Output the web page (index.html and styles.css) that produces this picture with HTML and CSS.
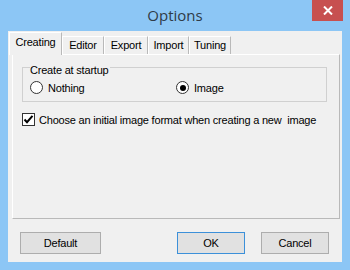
FILE: index.html
```html
<!DOCTYPE html>
<html>
<head>
<meta charset="utf-8">
<link rel="stylesheet" href="styles.css">
</head>
<body>
<div class="window">
  <div class="titlebar">
    <span></span>
    <span class="title">Options</span>
    <span class="close"><svg width="10" height="9" viewBox="0 0 10 9"><path d="M1 0.5 L9 8.5 M9 0.5 L1 8.5" stroke="#fff" stroke-width="2"/></svg></span>
  </div>
  <div class="client">
    <div class="tabs">
      <span class="tab active">Creating</span>
      <span class="tab t-editor">Editor</span>
      <span class="tab t-export">Export</span>
      <span class="tab t-import">Import</span>
      <span class="tab t-tuning">Tuning</span>
    </div>
    <div class="panel">
      <fieldset class="group">
        <legend>Create at startup</legend>
        <div class="radios">
          <span class="radio"><span class="circle"></span>Nothing</span>
          <span class="radio"><span class="circle on"></span>Image</span>
        </div>
      </fieldset>
      <div class="check">
        <span class="box"><svg width="11" height="11" viewBox="0 0 11 11"><path d="M1.5 5.5 L4 8.2 L9.5 1.8" fill="none" stroke="#000" stroke-width="2"/></svg></span>
        <span>Choose an initial image format when creating a new&nbsp; image</span>
      </div>
    </div>
    <div class="buttons">
      <span class="btn wide">Default</span>
      <span class="spacer"></span>
      <span class="btn default">OK</span>
      <span class="btn">Cancel</span>
    </div>
  </div>
</div>
</body>
</html>
```

FILE: styles.css
```css
html, body {
  margin: 0;
  padding: 0;
}
body {
  width: 350px;
  height: 270px;
  overflow: hidden;
  font-family: "Liberation Sans", Arial, sans-serif;
  font-size: 11px;
  letter-spacing: -0.2px;
  color: #000;
}
.window {
  width: 350px;
  height: 270px;
  background: #8cc6f5;
  display: flex;
  flex-direction: column;
}
.titlebar {
  height: 31px;
  display: grid;
  grid-template-columns: 1fr auto 1fr;
  align-items: start;
}
.title {
  font-family: "Open Sans", "Noto Sans", sans-serif;
  font-size: 15px;
  letter-spacing: 0;
  color: #2f3b47;
  line-height: 30px;
}
.close {
  justify-self: end;
  width: 31px;
  height: 21px;
  margin-right: 7px;
  background: #c75050;
  display: flex;
  align-items: center;
  justify-content: center;
}
.client {
  margin: 0 8px;
  height: 231px;
  background: #f0f0f0;
  display: flex;
  flex-direction: column;
}
.tabs {
  height: 23px;
  display: flex;
  align-items: flex-end;
  padding-left: 1px;
  position: relative;
  z-index: 1;
}
.tab {
  height: 18px;
  box-sizing: border-box;
  text-align: center;
  line-height: 17px;
  border: 1px solid #b9b9b9;
  border-bottom: none;
  border-top-color: #fff;
  border-left-color: #fff;
  background: #f0f0f0;
}
.t-editor { width: 42px; }
.t-export { width: 44px; }
.t-import { width: 41px; }
.t-tuning { width: 42px; }
.tab.active {
  width: 53px;
  height: 23px;
  line-height: 18px;
  position: relative;
  z-index: 2;
  margin-bottom: -1px;
}
.panel {
  margin-left: 4px;
  width: 328px;
  height: 165px;
  box-sizing: border-box;
  border: 1px solid #b9b9b9;
  border-top-color: #fff;
  border-left-color: #fff;
  padding: 0 0 0 9px;
}
.group {
  margin: 4px 0 0 0;
  width: 305px;
  height: 43px;
  box-sizing: border-box;
  padding: 0 0 0 7px;
  border: 1px solid #d0d0d0;
}
.group legend {
  padding: 6px 1px 0 0;
  margin-left: 0;
  line-height: 11px;
}
.radios {
  display: flex;
  margin-top: 5px;
}
.radio {
  display: flex;
  align-items: center;
  gap: 5px;
}
.radio:first-child {
  width: 146px;
}
.circle {
  width: 11px;
  height: 11px;
  border: 1px solid #333;
  border-radius: 50%;
  background: #fff;
  display: flex;
  align-items: center;
  justify-content: center;
}
.circle.on::after {
  content: "";
  width: 6px;
  height: 6px;
  border-radius: 50%;
  background: #000;
}
.check {
  margin-top: 11px;
  display: flex;
  align-items: center;
  gap: 4px;
}
.box {
  width: 11px;
  height: 11px;
  border: 1px solid #333;
  background: #fff;
  display: flex;
  align-items: center;
  justify-content: center;
}
.buttons {
  display: flex;
  margin-top: 13px;
  padding: 0 13px 0 12px;
  gap: 16px;
}
.spacer {
  flex: 1;
}
.btn {
  width: 68px;
  height: 22px;
  box-sizing: border-box;
  background: #e1e1e1;
  border: 1px solid #adadad;
  display: flex;
  align-items: center;
  justify-content: center;
}
.btn.wide {
  width: 81px;
}
.btn.default {
  border-color: #3c90d9;
}
```
